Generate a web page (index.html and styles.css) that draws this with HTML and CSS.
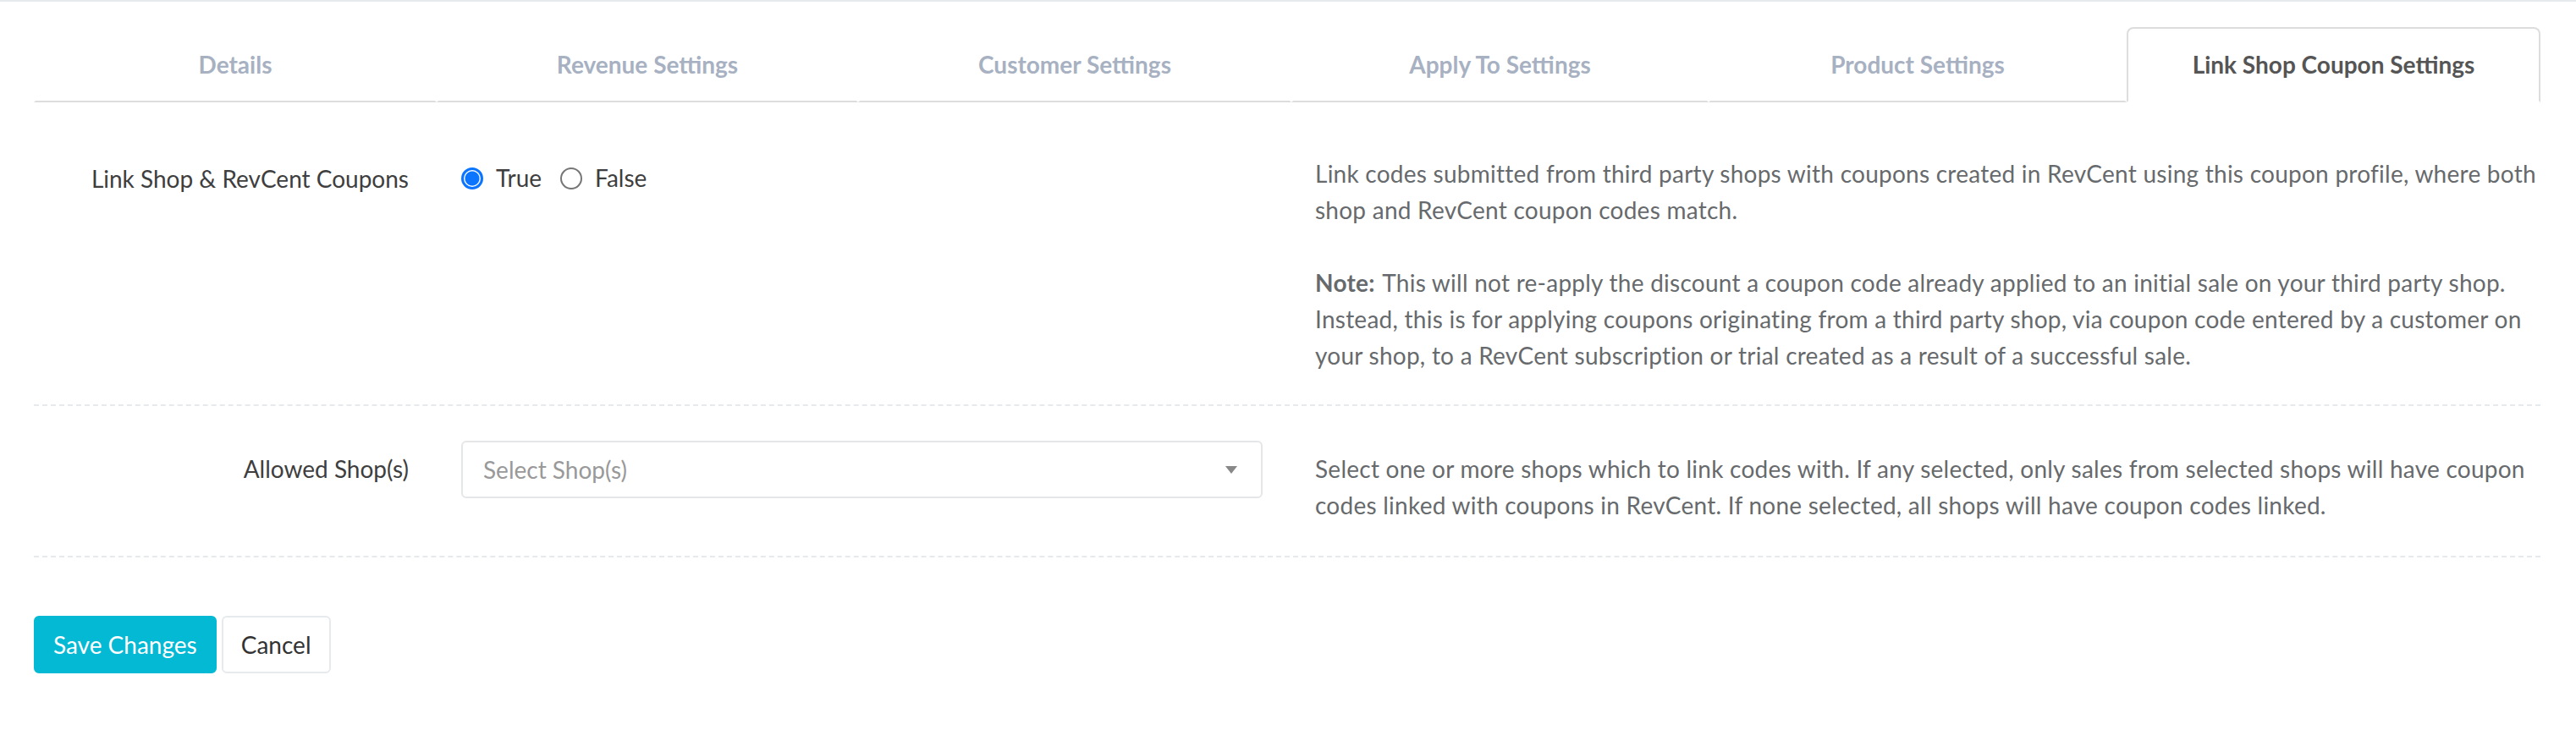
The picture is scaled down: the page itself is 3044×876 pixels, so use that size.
FILE: index.html
```html
<!doctype html>
<html>
    <head>
        <title>Coupon Profile</title>
        <link rel="stylesheet" href="styles.css">
    </head>
    <body>
        <div class="page">
            <ul class="tabs">
                <li class="tab">Details</li>
                <li class="tab">Revenue Settings</li>
                <li class="tab">Customer Settings</li>
                <li class="tab">Apply To Settings</li>
                <li class="tab">Product Settings</li>
                <li class="tab active">Link Shop Coupon Settings</li>
            </ul>

            <section class="tab-content">
                <div class="form-row first">
                    <label class="form-label">Link Shop &amp; RevCent Coupons</label>
                    <div class="radios">
                        <label class="radio"><input type="radio" name="link" checked><span>True</span></label>
                        <label class="radio"><input type="radio" name="link"><span>False</span></label>
                    </div>
                    <div class="help">
                        <p>Link codes submitted from third party shops with coupons created in RevCent using this coupon profile, where both shop and RevCent coupon codes match.</p>
                        <p><b>Note:</b> This will not re-apply the discount a coupon code already applied to an initial sale on your third party shop. Instead, this is for applying coupons originating from a third party shop, via coupon code entered by a customer on your shop, to a RevCent subscription or trial created as a result of a successful sale.</p>
                    </div>
                </div>

                <div class="line-dashed"></div>

                <div class="form-row second">
                    <label class="form-label">Allowed Shop(s)</label>
                    <div class="select">
                        <span class="placeholder">Select Shop(s)</span>
                        <span class="caret"></span>
                    </div>
                    <div class="help">
                        <p>Select one or more shops which to link codes with. If any selected, only sales from selected shops will have coupon codes linked with coupons in RevCent. If none selected, all shops will have coupon codes linked.</p>
                    </div>
                </div>

                <div class="line-dashed last"></div>

                <div class="actions">
                    <button class="btn btn-primary">Save Changes</button>
                    <button class="btn btn-white">Cancel</button>
                </div>
            </section>
        </div>
    </body>
</html>
```

FILE: styles.css
```css
html,
body {
    margin: 0;
    background: #ffffff;
    font-family: Lato, "Open Sans", sans-serif;
    font-size: 28px;
    line-height: 43px;
    color: #676a6c;
}

body {
    border-top: 2px solid #e7eaec;
}

.page {
    padding: 30px 42px 0 40px;
}

.tabs {
    display: grid;
    grid-template-columns: 476px 498px 512px 493px 494px 1fr;
    margin: 0;
    padding: 0;
    list-style: none;
}

.tab {
    text-align: center;
    padding: 21px 0;
    font-weight: 700;
    color: #a7b1c2;
    border: 2px solid transparent;
    border-bottom-color: #dddddd;
    border-radius: 8px 8px 0 0;
}

.tab.active {
    color: #555555;
    border-color: #dddddd #dddddd #ffffff;
}

.tab-content {
    padding-top: 63px;
}

.form-row {
    display: grid;
    grid-template-columns: 443px 947px 1fr;
    column-gap: 62px;
    align-items: start;
}

.form-label {
    text-align: right;
    color: #3e3e3e;
    padding-top: 6px;
}

.second .form-label {
    padding-top: 12px;
}

.radios {
    display: flex;
    gap: 22px;
    padding-top: 5px;
}

.radio {
    display: flex;
    align-items: center;
    gap: 15px;
    color: #3e3e3e;
}

.radio input {
    appearance: none;
    margin: 0;
    width: 26px;
    height: 26px;
    border: 2px solid #767676;
    border-radius: 50%;
    background: #ffffff;
}

.radio input:checked {
    border: 3px solid #0b75ff;
    background: radial-gradient(circle, #0b75ff 0 8px, #ffffff 9px);
}

.help {
    letter-spacing: 0.25px;
}

.help p {
    margin: 0 0 43px;
}

.help p:last-child {
    margin: 0;
}

.help b {
    margin-right: 2px;
}

.second .help {
    padding-top: 12px;
}

.select {
    display: flex;
    align-items: center;
    justify-content: space-between;
    height: 64px;
    padding: 0 28px 0 24px;
    border: 2px solid #e5e6e7;
    border-radius: 6px;
}

.placeholder {
    color: #999999;
}

.caret {
    width: 0;
    height: 0;
    border-left: 7px solid transparent;
    border-right: 7px solid transparent;
    border-top: 9px solid #888888;
}

.line-dashed {
    border-top: 2px dashed #e7eaec;
    margin: 36px 0 41px;
}

.line-dashed.last {
    margin: 38px 0 69px;
}

.actions {
    display: flex;
    gap: 6px;
}

.btn {
    font-family: inherit;
    font-size: 28px;
    line-height: 43px;
    height: 68px;
    padding: 0 21px;
    border-radius: 6px;
    cursor: pointer;
}

.btn-primary {
    background: #04b9d4;
    border: 2px solid #04b9d4;
    color: #ffffff;
}

.btn-white {
    background: #ffffff;
    border: 2px solid #e7eaec;
    color: #333333;
}
```
